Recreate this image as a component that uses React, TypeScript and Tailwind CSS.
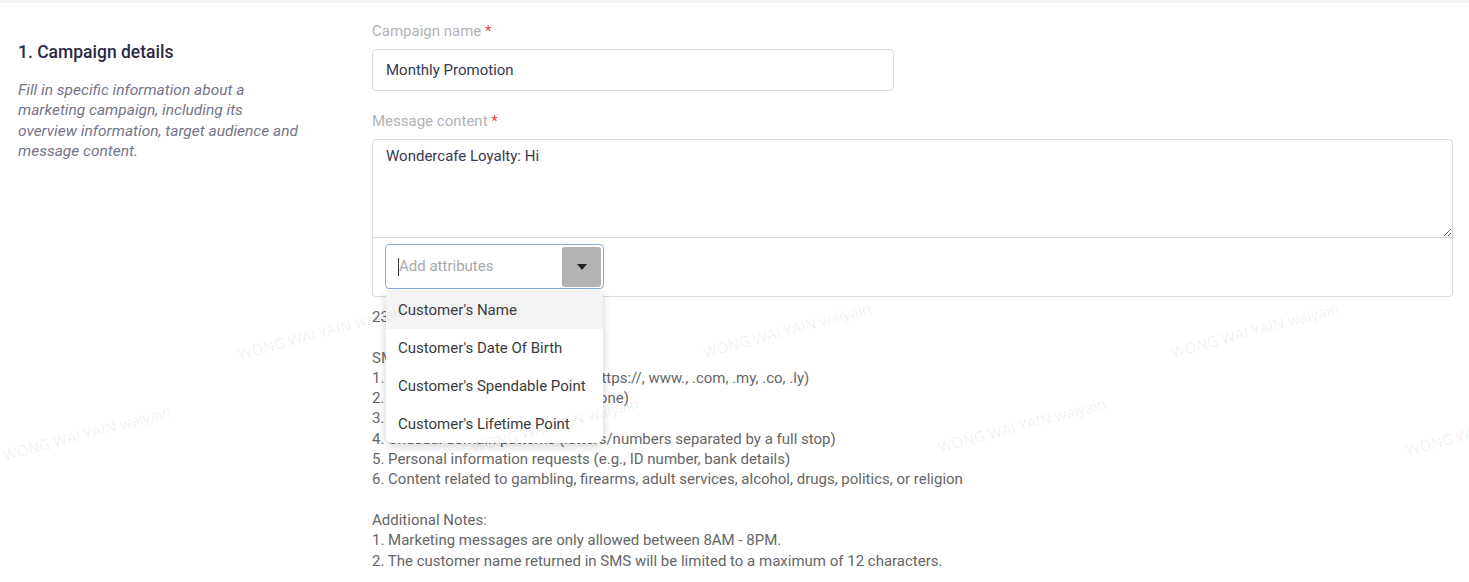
import React from 'react';

const attributes = [
  "Customer's Name",
  "Customer's Date Of Birth",
  "Customer's Spendable Point",
  "Customer's Lifetime Point",
];

const rules = [
  'SMS content must not contain:',
  '1. URL or short links (e.g., http://, https://, www., .com, .my, .co, .ly)',
  '2. Phone numbers (e.g., mobile phone)',
  '3. Email addresses',
  '4. Unusual domain patterns (letters/numbers separated by a full stop)',
  '5. Personal information requests (e.g., ID number, bank details)',
  '6. Content related to gambling, firearms, adult services, alcohol, drugs, politics, or religion',
  '',
  'Additional Notes:',
  '1. Marketing messages are only allowed between 8AM - 8PM.',
  '2. The customer name returned in SMS will be limited to a maximum of 12 characters.',
];

const watermarks = [
  { x: 322, y: 332 },
  { x: 787, y: 330 },
  { x: 1255, y: 330 },
  { x: 87, y: 433 },
  { x: 555, y: 425 },
  { x: 1022, y: 425 },
  { x: 1490, y: 428 },
];

const Label = ({ text }: { text: string }) => (
  <div className="text-[15px] leading-5 text-[#b3b3b3] mb-2">
    {text} <span className="text-[#e5484d]">*</span>
  </div>
);

export default function App() {
  return (
    <div
      className="relative w-full h-[582px] overflow-hidden bg-white"
      style={{ fontFamily: 'Roboto, "Liberation Sans", sans-serif' }}
    >
      <div className="h-[3px] bg-[#f2f5f5]" />

      <div className="flex">
        {/* left column */}
        <div className="w-[372px] shrink-0 pl-[18px] pt-[39px]">
          <h2 className="text-[17.5px] leading-5 font-medium text-[#2c2a44]">1. Campaign details</h2>
          <p className="mt-[18px] w-[283px] text-[15.5px] leading-[20.3px] italic text-[#767488]">
            Fill in specific information about a marketing campaign, including its overview information, target
            audience and message content.
          </p>
        </div>

        {/* right column */}
        <div className="flex-1 pr-[16px] pt-[18px]">
          <Label text="Campaign name" />
          <div className="w-[522px] h-[42px] flex items-center px-[13px] border border-[#dedede] rounded-[4px] text-[15px] text-[#3a3950]">
            Monthly Promotion
          </div>

          <div className="mt-5">
            <Label text="Message content" />
          </div>
          <div className="border border-[#dcdcdc] rounded-[4px]">
            <textarea
              readOnly
              defaultValue="Wondercafe Loyalty: Hi"
              className="block w-full h-[98px] resize-y px-[13px] pt-[6px] border-b border-[#d6d6d6] rounded-t-[4px] text-[15px] leading-5 text-[#3a3950] outline-none"
            />
            <div className="relative h-[58px] px-[12px] pt-[6px]">
              <div className="w-[219px] h-[45px] flex items-center border border-[#86aedb] rounded-[4px] pl-[12px] pr-[2px]">
                <span className="w-px h-[18px] bg-[#333]" />
                <span className="flex-1 text-[15px] text-[#a9a9a9]">Add attributes</span>
                <div className="w-[39px] h-[40px] rounded-[3px] bg-[#b3b3b3] flex items-center justify-center">
                  <svg width="10" height="6" viewBox="0 0 10 6">
                    <path d="M0 0 L10 0 L5 6 Z" fill="#222" />
                  </svg>
                </div>
              </div>

              <div className="absolute z-10 left-[13px] top-[53px] w-[217px] bg-white rounded-b-[6px] shadow-[0_3px_8px_rgba(0,0,0,0.18)] overflow-hidden">
                {attributes.map((a, i) => (
                  <div
                    key={a}
                    className={`h-[38px] flex items-center pl-[12px] text-[15px] text-[#3b3b3b] ${
                      i === 0 ? 'bg-[#f4f4f4]' : ''
                    }`}
                  >
                    {a}
                  </div>
                ))}
              </div>
            </div>
          </div>

          <div className="mt-[10px] text-[15px] leading-[20.3px] text-[#666]">
            <div>23 characters / 1 SMS</div>
            <div className="h-[20.3px]" />
            {rules.map((r, i) => (
              <div key={i} className="h-[20.3px] whitespace-nowrap">
                {r}
              </div>
            ))}
          </div>
        </div>
      </div>

      {/* watermark */}
      {watermarks.map((w, i) => (
        <span
          key={i}
          className="pointer-events-none absolute z-20 whitespace-nowrap text-[15px] text-[rgba(0,0,0,0.07)] -translate-x-1/2 -translate-y-1/2 -rotate-[15deg]"
          style={{ left: w.x, top: w.y, fontFamily: '"Open Sans", sans-serif' }}
        >
          WONG WAI YAIN waiyain
        </span>
      ))}
    </div>
  );
}
